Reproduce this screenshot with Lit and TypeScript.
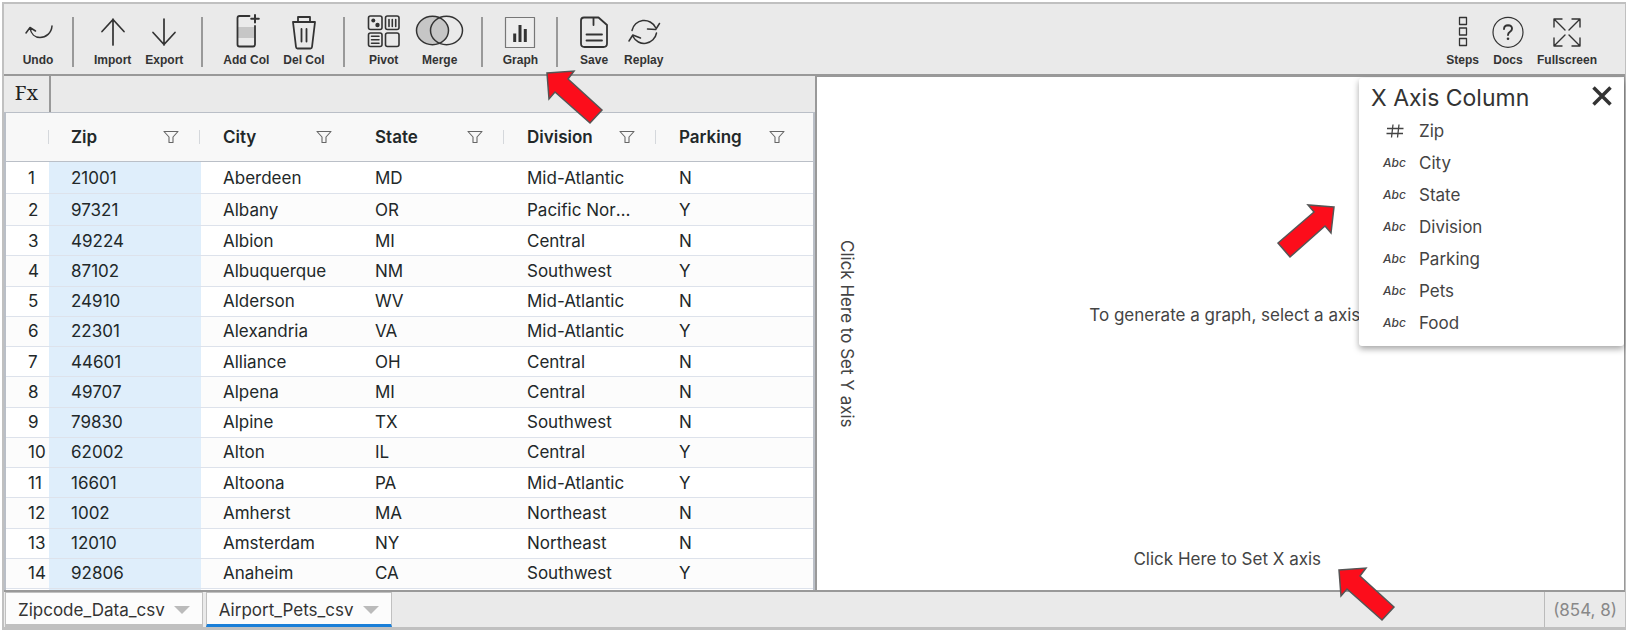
import { LitElement, html, svg, css, nothing } from "lit";
import { customElement, property, state } from "lit/decorators.js";
import { classMap } from "lit/directives/class-map.js";

const icons: Record<string, { width: number; art: unknown }> = {
  Undo: { width: 32, art: svg`<path d="M8 15C9 21 13 24.500 18 24.500C24 24.500 29.500 20 30 13M4 20L8 14.500L13.500 18"/>` },
  Import: { width: 32, art: svg`<path d="M16 32V6M5 18.500L16 6.500L27 18.500" stroke-width="1.700"/>` },
  Export: { width: 32, art: svg`<path d="M16 6V32M5 19.500L16 31.500L27 19.500" stroke-width="1.700"/>` },
  "Add Col": {
    width: 32,
    art: svg`<rect x="8" y="14" width="17" height="11" fill="#c6c6c6" stroke="none"/>
      <path d="M19.500 3H9.500Q7.500 3 7.500 5V31.500Q7.500 33.500 9.500 33.500H23Q25 33.500 25 31.500V13" stroke-width="1.800"/>
      <path d="M25 2V9.500M21.200 5.800H28.800" stroke-width="2"/>`,
  },
  "Del Col": {
    width: 32,
    art: svg`<path d="M5 9H27L24 34Q23.800 35.500 22.500 35.500H9.500Q8.200 35.500 8 34ZM10 9V4H22V9M13.500 16V28.500M18.500 16V28.500" stroke-width="1.800"/>`,
  },
  Pivot: {
    width: 38,
    art: svg`<g stroke-width="1.600"><rect x="3.500" y="3" width="13.500" height="13.500" rx="2"/><rect x="20.500" y="3" width="13.500" height="13.500" rx="2"/>
      <rect x="3.500" y="20" width="13.500" height="13.500" rx="2"/><rect x="20.500" y="20" width="13.500" height="13.500" rx="2"/>
      <path d="M24 6.500V13.500M27.300 6.500V13.500M30.700 6.500V13.500M6.500 23.300H14M6.500 26.700H14M6.500 30.200H14"/></g>
      <circle cx="8.300" cy="7.500" r="2" fill="#333" stroke="none"/><circle cx="12.500" cy="12" r="2.200" fill="#333" stroke="none"/>`,
  },
  Merge: {
    width: 46,
    art: svg`<ellipse cx="15.500" cy="17.500" rx="16" ry="14.200" fill="#c6c6c6"/><ellipse cx="29.500" cy="17.500" rx="16" ry="14.200"/>`,
  },
  Graph: {
    width: 32,
    art: svg`<rect x="1.500" y="4.500" width="29" height="30" stroke="#777" fill="#eee" stroke-width="1.200"/>
      <path d="M10.700 20.500V29M16 12V29M21.300 16V29" stroke-width="3" stroke-linecap="butt"/>`,
  },
  Save: {
    width: 32,
    art: svg`<path d="M6 4.500H20.500L29 12V30.500Q29 34 25.500 34H6.500Q3 34 3 30.500V7.500Q3 4.500 6 4.500ZM15.500 5V12M8.500 21.500H24M8.500 27.500H24" stroke-width="1.800"/>`,
  },
  Replay: {
    width: 32,
    art: svg`<path d="M4 17.500A12.500 12.500 0 0 1 27.500 14.500M31.500 10.500L27.700 16.500L19.500 16M28.500 20A12.500 12.500 0 0 1 5 23.500M1 28L4.800 22L12.500 25"/>`,
  },
  Steps: {
    width: 32,
    art: svg`<path d="M12.500 4.500H19.500V11.500H12.500ZM12.500 15H19.500V22H12.500ZM12.500 25.500H19.500V32.500H12.500Z" stroke-width="1.300" stroke-linecap="butt"/>`,
  },
  Docs: {
    width: 32,
    art: svg`<circle cx="16" cy="19.300" r="15" stroke-width="1.200"/>
      <path d="M12 16Q12.200 12.300 16 12.300Q20.200 12.500 20 15.800Q19.800 17.500 18 18.700Q16 20 16 22" stroke-width="1.900"/><circle cx="16" cy="25.800" r="1.300" fill="#333" stroke="none"/>`,
  },
  Fullscreen: {
    width: 32,
    art: svg`<path d="M14 17L3 6M3 14V6H11M18 17L29 6M21 6H29V14M14 22L3 33M3 25V33H11M18 22L29 33M21 33H29V25" stroke-width="1.400"/>`,
  },
};

const toolGroups = [["Undo"], ["Import", "Export"], ["Add Col", "Del Col"], ["Pivot", "Merge"], ["Graph"], ["Save", "Replay"]];
const sideTools = ["Steps", "Docs", "Fullscreen"];
const columns = ["Zip", "City", "State", "Division", "Parking"];
const rows = [
  ["21001", "Aberdeen", "MD", "Mid-Atlantic", "N"],
  ["97321", "Albany", "OR", "Pacific Northwest", "Y"],
  ["49224", "Albion", "MI", "Central", "N"],
  ["87102", "Albuquerque", "NM", "Southwest", "Y"],
  ["24910", "Alderson", "WV", "Mid-Atlantic", "N"],
  ["22301", "Alexandria", "VA", "Mid-Atlantic", "Y"],
  ["44601", "Alliance", "OH", "Central", "N"],
  ["49707", "Alpena", "MI", "Central", "N"],
  ["79830", "Alpine", "TX", "Southwest", "N"],
  ["62002", "Alton", "IL", "Central", "Y"],
  ["16601", "Altoona", "PA", "Mid-Atlantic", "Y"],
  ["1002", "Amherst", "MA", "Northeast", "N"],
  ["12010", "Amsterdam", "NY", "Northeast", "N"],
  ["92806", "Anaheim", "CA", "Southwest", "Y"],
];
const axisOptions = ["Zip", "City", "State", "Division", "Parking", "Pets", "Food"];

const base = css`
  * { box-sizing: border-box; }
  button {
    margin: 0; padding: 0; border: 0; background: none; color: inherit;
    font: inherit; cursor: pointer;
  }
  svg { display: block; }
`;

const pointerShapes = {
  upLeft: "1,2 28,0 22,8 56,39 44,52 9,21 3,28",
  upRight: "57,2 31,0 37,7 1,38 13,52 48,21 54,28",
};

@customElement("callout-arrow")
class CalloutArrow extends LitElement {
  @property() direction: "upLeft" | "upRight" = "upLeft";
  static styles = [base, css`
    :host { display: block; pointer-events: none; }
    .shape { overflow: visible; fill: #fc0d1b; stroke: #555; stroke-width: 1.500; }
  `];
  render() {
    return html`<svg class="shape" width="58" height="53" aria-hidden="true"><polygon points=${pointerShapes[this.direction]}></polygon></svg>`;
  }
}

@customElement("tool-button")
class ToolButton extends LitElement {
  @property() label = "";
  static styles = [base, css`
    :host { display: block; }
    .tool {
      display: flex; flex-direction: column; align-items: center; gap: 4px;
      font: bold 12px/14px "Liberation Sans", Arial, sans-serif; color: #333; white-space: nowrap;
    }
    .icon {
      overflow: visible; fill: none; stroke: #333; stroke-width: 1.500;
      stroke-linecap: round; stroke-linejoin: round;
    }
  `];
  render() {
    const icon = icons[this.label];
    if (!icon) return nothing;
    return html`<button class="tool" type="button">
      <svg class="icon" width=${icon.width} height="36" aria-hidden="true">${icon.art}</svg>
      <span>${this.label}</span>
    </button>`;
  }
}

@customElement("tool-bar")
class ToolBar extends LitElement {
  static styles = [base, css`
    :host { display: flex; justify-content: space-between; align-items: stretch; padding-top: 9px; padding-bottom: 5px; }
    .side { display: flex; gap: 13px; padding-right: 28px; }
    .groups { display: flex; padding: 4px 0 2px; }
    .group { display: flex; gap: 14px; padding: 0 18px; position: relative; }
    .group + .group { border-left: 2px solid #999; padding-left: 20px; }
    .lift { margin-top: -4px; }
    .arrow { position: absolute; left: 63px; top: 54px; z-index: 5; }
  `];
  render() {
    return html`
      <div class="groups">
        ${toolGroups.map((group) => html`<div class="group">
          ${group.map((name) => html`<tool-button class="lift" label=${name}></tool-button>`)}
          ${group[0] === "Graph" ? html`<callout-arrow class="arrow"></callout-arrow>` : nothing}
        </div>`)}
      </div>
      <div class="side">${sideTools.map((name) => html`<tool-button label=${name}></tool-button>`)}</div>`;
  }
}

@customElement("data-grid")
class DataGrid extends LitElement {
  static styles = [base, css`
    :host { display: flex; flex-direction: column; min-width: 0; }
    .grid { flex: 1; display: flex; flex-direction: column; border: solid #babfc7; border-width: 1px 2px 0 2px; background: #fff; }
    table {
      flex: 1; width: 100%; height: 100%; border-collapse: separate; border-spacing: 0; table-layout: fixed;
      font: 17px/24px Inter, sans-serif; color: #222829;
    }
    .index { width: 43px; }
    .field { width: 152px; }
    th { height: 49px; padding: 0; background: #f8f8f8; border-bottom: 1px solid #babfc7; font-weight: 600; text-align: left; }
    .head { display: flex; align-items: center; justify-content: space-between; height: 14px; margin-right: 1px; padding: 0 20px 0 22px; }
    .head.split { border-right: 1px solid #d5d8dc; }
    .last .head { padding-right: 27px; }
    .filter { fill: none; stroke: #666; stroke-width: 1.100; stroke-linejoin: round; }
    td { padding: 0 22px; border-bottom: 1px solid #dde2eb; white-space: nowrap; overflow: hidden; text-overflow: ellipsis; }
    tbody tr:nth-child(-n + 2) td { height: 32px; }
    tr:nth-child(even) td { background: #fcfcfc; }
    td.number { padding-right: 0; overflow: visible; }
    tbody td.picked { background: #dfeefb; }
    .peek { display: flex; flex: none; height: 1px; padding-left: 43px; }
    .peek-cell { width: 152px; background: #dfeefb; }
  `];
  render() {
    return html`<div class="grid">
      <table>
        <colgroup><col class="index">${columns.map((_, i) => (i < 4 ? html`<col class="field">` : html`<col>`))}</colgroup>
        <thead><tr>
          <th><div class="head split"></div></th>
          ${columns.map((name, i) => html`<th scope="col" class=${classMap({ last: i === 4 })}>
            <div class=${classMap({ head: true, split: i === 0 || i === 2 || i === 3 })}>
              <span>${name}</span>
              <button type="button" aria-label=${"Filter " + name}>
                <svg class="filter" width="16" height="12"><path d="M1 .500H15L10 6V11.500H6V6Z"/></svg>
              </button>
            </div></th>`)}
        </tr></thead>
        <tbody>
          ${rows.map((row, r) => html`<tr><td class="number">${r + 1}</td>
            ${row.map((value, c) => html`<td class=${classMap({ picked: c === 0 })}>${value}</td>`)}</tr>`)}
        </tbody>
      </table>
      <div class="peek"><div class="peek-cell"></div></div>
    </div>`;
  }
}

@customElement("graph-panel")
class GraphPanel extends LitElement {
  @state() private axis = "";
  static styles = [base, css`
    :host {
      position: relative; display: grid; grid-template-columns: 50px minmax(0, 1fr); background: #fff;
      border: solid #999; border-width: 1px 1px 0 2px; padding-right: 36px;
      font: 17px/24px Inter, sans-serif; color: #444;
    }
    .y-axis { writing-mode: vertical-rl; text-align: center; padding: 0 8px 0 18px; }
    .plot { display: flex; flex-direction: column; align-items: center; }
    .hint { flex: 1; display: flex; align-items: center; padding-top: 5px; white-space: nowrap; }
    .x-axis { position: relative; padding-bottom: 19px; }
    .x-arrow { position: absolute; left: 100%; top: 21px; margin-left: 17px; z-index: 5; }
    .picker {
      position: absolute; top: 1px; right: 0; width: 265px; padding: 4px 12px 7px; background: #fff;
      border-radius: 3px; box-shadow: 0 3px 6px rgba(0, 0, 0, 0.350);
    }
    .picker-arrow { position: absolute; left: -82px; top: 127px; }
    .title-row { display: flex; justify-content: space-between; align-items: flex-start; }
    h2 { margin: 0; font: 23px/32px Inter, sans-serif; color: #333; white-space: nowrap; }
    .cross { stroke: #333; stroke-width: 3.500; }
    .close { padding-top: 4px; }
    ul { margin: 0; padding: 1px 0 0; list-style: none; }
    .option { display: flex; align-items: center; width: 100%; height: 32px; text-align: left; }
    .kind { width: 48px; padding-left: 12px; font: italic 500 12px/24px Inter, sans-serif; }
    .hash { margin-left: 3px; stroke: #444; stroke-width: 1.300; }
    .chosen { font-weight: 600; }
  `];
  render() {
    return html`
      <button class="y-axis" type="button">Click Here to Set Y axis</button>
      <div class="plot">
        <div class="hint">To generate a graph, select a axis.</div>
        <div class="x-axis">
          <button type="button">Click Here to Set X axis</button>
          <callout-arrow class="x-arrow"></callout-arrow>
        </div>
      </div>
      <div class="picker">
        <div class="title-row">
          <h2>X Axis Column</h2>
          <button class="close" type="button" aria-label="Close">
            <svg class="cross" width="20" height="20"><path d="M1.500 1.500L18.500 18.500M18.500 1.500L1.500 18.500"/></svg>
          </button>
        </div>
        <ul>${axisOptions.map((name) => html`<li>
          <button type="button" class=${classMap({ option: true, chosen: this.axis === name })} @click=${() => (this.axis = name)}>
            <span class="kind">${name === "Zip"
              ? html`<svg class="hash" width="18" height="14" aria-hidden="true"><path d="M1 4.500H17.500M.500 9.500H17M7 .500L5.500 13.500M13 .500L11.500 13.500"/></svg>`
              : "Abc"}</span>
            <span>${name}</span>
          </button></li>`)}</ul>
        <callout-arrow class="picker-arrow" direction="upRight"></callout-arrow>
      </div>`;
  }
}

@customElement("app-root")
class AppRoot extends LitElement {
  @state() private sheet = "Airport_Pets_csv";
  static styles = [base, css`
    :host { display: block; box-sizing: border-box; height: 100vh; min-height: 600px; padding: 2px 0 0 2px; background: #fff; }
    .frame {
      height: 100%; display: flex; flex-direction: column; background: #eaeaea;
      border: solid #c0c0c0; border-width: 2px 1px 3px 2px;
    }
    .work { flex: 1; min-height: 0; display: grid; grid-template-columns: minmax(0, 1fr) minmax(0, 1fr); border: solid #999; border-width: 2px 0; }
    .left { display: flex; flex-direction: column; min-width: 0; }
    .formula { display: flex; flex: none; height: 36px; }
    .fx { width: 47px; border-right: 2px solid #999; text-align: center; font: 20px/34px "Noto Serif", "Liberation Serif", serif; color: #222; }
    .entry { flex: 1; min-width: 0; border: 0; background: none; outline: none; padding: 0 8px; font: 17px Inter, sans-serif; }
    .table { flex: 1; min-height: 0; }
    .status { flex: none; height: 35px; display: flex; justify-content: space-between; font: 17px/24px Inter, sans-serif; }
    .tabs { display: flex; gap: 3px; padding-left: 1px; }
    .tab {
      display: flex; align-items: center; gap: 9px; padding: 2px 12px 0; color: #333; background: #fcfcfc;
      border: solid #c0c0c0; border-width: 1px 1px 3px;
    }
    .active { border-bottom-color: #1a7fd8; }
    .caret { fill: #bbb; }
    .size { display: flex; align-items: center; border-left: 1px solid #bbb; padding: 0 8px; color: #888; }
  `];
  render() {
    return html`<div class="frame">
      <tool-bar></tool-bar>
      <main class="work">
        <section class="left">
          <div class="formula">
            <label class="fx" for="formula">Fx</label>
            <input class="entry" id="formula" type="text">
          </div>
          <data-grid class="table"></data-grid>
        </section>
        <graph-panel></graph-panel>
      </main>
      <footer class="status">
        <div class="tabs" role="tablist">
          ${["Zipcode_Data_csv", "Airport_Pets_csv"].map((name) => html`
            <button type="button" role="tab" aria-selected=${this.sheet === name}
              class=${classMap({ tab: true, active: this.sheet === name })} @click=${() => (this.sheet = name)}>
              <span>${name}</span>
              <svg class="caret" width="16" height="9" aria-hidden="true"><path d="M0 1H16L8 9Z"/></svg>
            </button>`)}
        </div>
        <div class="size">(854, 8)</div>
      </footer>
    </div>`;
  }
}
